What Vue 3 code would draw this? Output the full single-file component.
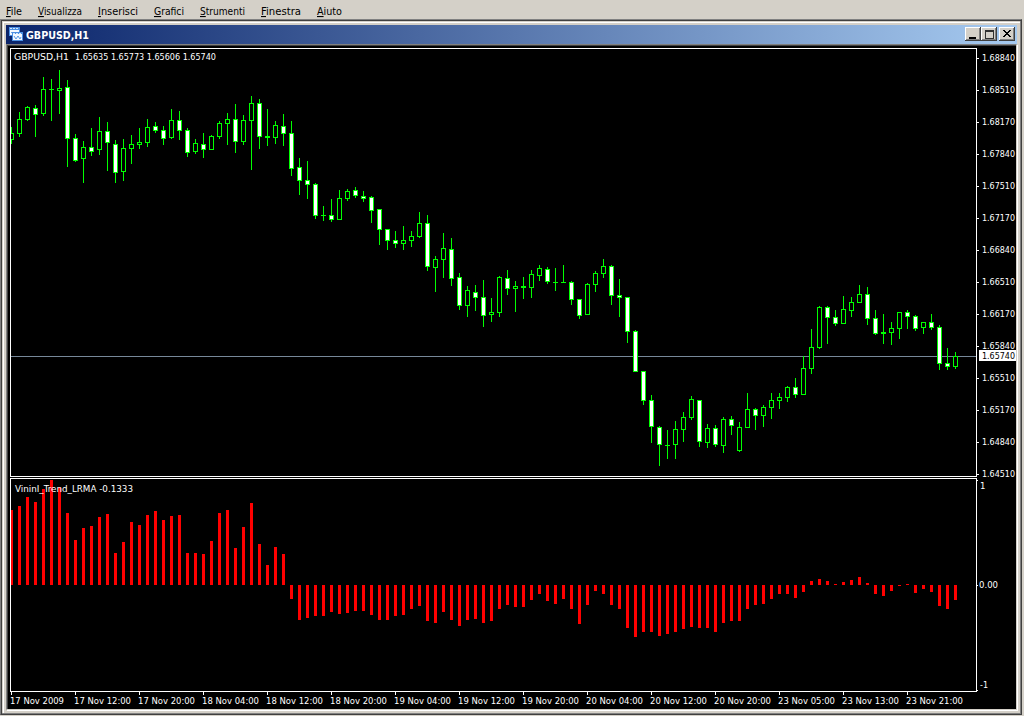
<script setup>
import { computed } from 'vue'

const menu = [
  { label: 'File', width: 16 },
  { label: 'Visualizza', width: 44 },
  { label: 'Inserisci', width: 40 },
  { label: 'Grafici', width: 30 },
  { label: 'Strumenti', width: 45 },
  { label: 'Finestra', width: 40 },
  { label: 'Aiuto', width: 25 }
]

const prices = ['1.68840', '1.68510', '1.68170', '1.67840', '1.67510', '1.67170', '1.66840',
  '1.66510', '1.66170', '1.65840', '1.65510', '1.65170', '1.64840', '1.64510']

const times = ['17 Nov 2009', '17 Nov 12:00', '17 Nov 20:00', '18 Nov 04:00', '18 Nov 12:00',
  '18 Nov 20:00', '19 Nov 04:00', '19 Nov 12:00', '19 Nov 20:00', '20 Nov 04:00',
  '20 Nov 12:00', '20 Nov 20:00', '23 Nov 05:00', '23 Nov 13:00', '23 Nov 21:00']

// wick top, body top, body bottom, wick bottom, 1 = bearish
const bars = [
  [127, 133, 140, 144, 0], [112, 119, 134, 137, 0], [106, 107, 120, 121, 0], [105, 108, 115, 137, 1],
  [77, 89, 114, 116, 0], [79, 89, 90, 121, 0], [70, 88, 91, 114, 0], [80, 87, 139, 167, 1],
  [134, 138, 161, 162, 1], [141, 147, 159, 183, 0], [128, 147, 152, 156, 1], [117, 131, 150, 155, 0],
  [122, 131, 143, 171, 1], [140, 144, 173, 183, 1], [139, 148, 172, 181, 0], [135, 144, 149, 164, 0],
  [128, 142, 145, 149, 0], [119, 127, 143, 147, 0], [122, 126, 131, 133, 1], [126, 130, 139, 145, 1],
  [109, 120, 138, 139, 0], [111, 120, 131, 140, 1], [128, 130, 153, 157, 1], [139, 143, 152, 154, 0],
  [133, 144, 150, 158, 1], [135, 136, 150, 150, 0], [121, 123, 137, 139, 0], [113, 119, 124, 145, 0],
  [104, 119, 142, 153, 1], [115, 120, 142, 145, 0], [96, 103, 121, 170, 0], [99, 103, 137, 149, 1],
  [109, 136, 138, 146, 0], [121, 125, 138, 144, 0], [114, 126, 134, 146, 1], [121, 133, 169, 176, 1],
  [158, 167, 181, 195, 1], [161, 180, 185, 199, 1], [183, 184, 216, 219, 1], [206, 215, 216, 221, 0],
  [199, 215, 220, 222, 1], [190, 198, 220, 220, 0], [189, 191, 199, 201, 0], [187, 190, 196, 198, 1],
  [191, 196, 199, 202, 1], [196, 197, 211, 223, 1], [209, 209, 230, 245, 1], [229, 229, 241, 250, 1],
  [231, 240, 244, 248, 1], [226, 240, 244, 250, 0], [231, 236, 241, 247, 0], [212, 223, 237, 238, 0],
  [215, 223, 267, 271, 1], [256, 259, 268, 292, 0], [233, 248, 260, 278, 0], [238, 249, 279, 286, 1],
  [273, 277, 306, 310, 1], [286, 290, 306, 317, 0], [285, 292, 298, 311, 1], [280, 297, 316, 327, 1],
  [298, 312, 315, 322, 0], [276, 277, 313, 317, 0], [270, 278, 289, 295, 1], [281, 286, 289, 312, 0],
  [277, 286, 288, 299, 0], [270, 274, 288, 298, 0], [265, 268, 276, 281, 0], [267, 269, 282, 284, 1],
  [268, 282, 283, 291, 0], [265, 282, 283, 283, 0], [281, 282, 300, 305, 1], [299, 299, 316, 319, 1],
  [283, 284, 315, 315, 0], [271, 273, 285, 292, 0], [259, 266, 274, 278, 0], [265, 266, 296, 305, 1],
  [279, 295, 298, 317, 1], [297, 297, 332, 343, 1], [330, 331, 372, 372, 1], [371, 371, 401, 405, 1],
  [395, 400, 427, 443, 1], [426, 427, 445, 466, 1], [430, 445, 446, 459, 0], [421, 429, 445, 459, 0],
  [412, 417, 430, 442, 0], [396, 399, 418, 420, 0], [400, 400, 442, 447, 1], [424, 428, 443, 448, 0],
  [425, 428, 445, 447, 1], [417, 419, 446, 453, 0], [416, 419, 426, 435, 1], [422, 427, 451, 452, 0],
  [393, 409, 428, 428, 0], [408, 409, 416, 430, 1], [405, 407, 416, 427, 0], [393, 400, 408, 419, 0],
  [393, 397, 401, 409, 0], [386, 387, 398, 402, 0], [378, 387, 395, 398, 1], [356, 368, 395, 395, 0],
  [329, 347, 369, 374, 0], [306, 307, 348, 349, 0], [306, 307, 318, 344, 1], [310, 317, 324, 326, 1],
  [296, 309, 324, 324, 0], [297, 302, 311, 317, 0], [285, 294, 303, 303, 0], [287, 294, 319, 325, 1],
  [310, 318, 334, 335, 1], [314, 332, 334, 344, 0], [322, 328, 333, 345, 0], [312, 312, 329, 339, 0],
  [310, 312, 317, 329, 1], [315, 316, 329, 331, 1], [322, 322, 328, 334, 0], [314, 322, 328, 330, 1],
  [325, 327, 364, 370, 1], [348, 363, 367, 370, 1], [352, 356, 367, 369, 0]
]

// height over (+) or under (-) the zero level
const trend = [
  75, 79, 88, 83, 96, 105, 98, 72, 45, 57, 59, 68, 71, 32, 43, 63, 60, 70, 74, 65,
  69, 70, 32, 32, 31, 44, 72, 75, 37, 58, 82, 41, 20, 38, 31, -14, -35, -33, -31, -31,
  -27, -29, -28, -26, -26, -30, -35, -35, -31, -30, -24, -21, -36, -38, -27, -35, -41, -35, -34, -38,
  -36, -24, -20, -22, -22, -15, -9, -16, -19, -14, -24, -39, -20, -6, -9, -20, -24, -43, -52, -47,
  -47, -51, -49, -47, -44, -42, -43, -43, -47, -38, -36, -36, -24, -20, -19, -14, -9, -9, -13, -7,
  4, 6, 4, 1, 3, 5, 8, 2, -9, -11, -6, -1, 1, -8, -4, -7, -21, -24, -15
]

const zero = 585

const candles = computed(() => bars.map(([high, top, bottom, low, down], i) => ({
  x: 11 + i * 8,
  high,
  top,
  height: bottom - top,
  range: low - high,
  fill: down ? '#fff' : '#000'
})))

const histogram = computed(() => trend.map((v, i) => ({
  x: 10 + i * 8,
  y: v > 0 ? zero - v : zero,
  height: Math.abs(v)
})))
</script>

<template>
  <div class="app">
    <nav class="menu">
      <a v-for="item in menu" :key="item.label">
        <svg :width="item.width" height="15">
          <text x="0" y="11" :textLength="item.width" lengthAdjust="spacingAndGlyphs"><tspan class="key">{{ item.label[0] }}</tspan>{{ item.label.slice(1) }}</text>
        </svg>
      </a>
    </nav>

    <div class="window">
      <header class="titlebar">
        <svg class="logo" width="16" height="16" shape-rendering="crispEdges">
          <rect x="0" y="0" width="11" height="9" fill="#4d90e2" />
          <rect x="1" y="3" width="9" height="5" fill="#f4f9ff" />
          <path d="M1 1.5h2M4 1.5h2M7 1.5h2" stroke="#d5e8fc" />
          <path d="M2 5h1v2h2v-2h1" fill="none" stroke="#6ba6e8" />
          <rect x="3" y="5" width="11" height="9" fill="#4d90e2" />
          <rect x="4" y="7" width="9" height="6" fill="#f4f9ff" />
          <path d="M4 6.5h2M7 6.5h2M10 6.5h2" stroke="#d5e8fc" />
          <path d="M5 9l2 3l2-3l2 3l1-2" fill="none" stroke="#5b9ae4" shape-rendering="auto" />
        </svg>
        <svg class="caption" width="66" height="16">
          <text x="0" y="12" textLength="63" lengthAdjust="spacingAndGlyphs">GBPUSD,H1</text>
        </svg>
        <div class="buttons">
          <button><svg width="12" height="11" shape-rendering="crispEdges"><rect x="2" y="8" width="7" height="2" /></svg></button>
          <button><svg width="12" height="11" shape-rendering="crispEdges"><path d="M2 1h9v9h-9zM3 3v6h7v-6z" fill="#303030" fill-rule="evenodd" /></svg></button>
          <button class="close"><svg width="12" height="11" shape-rendering="crispEdges"><path d="M2 1h2v1h1v1h2v-1h1v-1h2v1h-1v1h-1v1h-1v1h1v1h1v1h1v1h-2v-1h-1v-1h-2v1h-1v1h-2v-1h1v-1h1v-1h1v-1h-1v-1h-1v-1h-1z" /></svg></button>
        </div>
      </header>

      <div class="chart">
        <svg width="1008" height="663" viewBox="8 46 1008 663">
          <g shape-rendering="crispEdges">
            <rect x="11" y="356" width="965" height="1" fill="#778899" />
            <g v-for="c in candles" :key="c.x">
              <rect :x="c.x" :y="c.high" width="1" :height="c.range" fill="#0f0" />
              <rect :x="c.x - 2" :y="c.top" width="5" :height="c.height" fill="#0f0" />
              <rect v-if="c.height > 2" :x="c.x - 1" :y="c.top + 1" width="3" :height="c.height - 2" :fill="c.fill" />
            </g>
            <rect v-for="b in histogram" :key="b.x" :x="b.x" :y="b.y" width="3" :height="b.height" fill="#f00" />
            <rect x="8" y="120" width="2" height="480" fill="#000" />
            <g fill="#fff">
              <rect x="10" y="48" width="967" height="1" />
              <rect x="10" y="476" width="967" height="1" />
              <rect x="10" y="478" width="967" height="1" />
              <rect x="10" y="691" width="967" height="1" />
              <rect x="10" y="48" width="1" height="429" />
              <rect x="10" y="478" width="1" height="214" />
              <rect x="976" y="48" width="1" height="429" />
              <rect x="976" y="478" width="1" height="214" />
              <rect v-for="(p, i) in prices" :key="p" x="977" :y="58 + i * 32" width="2" height="1" />
              <rect v-for="(t, i) in times" :key="t" :x="11 + i * 64" y="692" width="1" height="3" />
              <rect x="977" y="480" width="1" height="1" />
              <rect x="977" y="585" width="1" height="1" />
              <rect x="977" y="690" width="1" height="1" />
            </g>
          </g>
          <g class="labels">
            <text x="14" y="60" textLength="55" lengthAdjust="spacingAndGlyphs">GBPUSD,H1</text>
            <text x="75" y="60" textLength="141" lengthAdjust="spacingAndGlyphs">1.65635 1.65773 1.65606 1.65740</text>
            <text x="15" y="492" textLength="118" lengthAdjust="spacingAndGlyphs">VininI_Trend_LRMA -0.1333</text>
            <text v-for="(p, i) in prices" :key="p" x="982" :y="61 + i * 32" textLength="33" lengthAdjust="spacingAndGlyphs">{{ p }}</text>
            <rect x="979" y="350" width="37" height="11" fill="#fff" />
            <text class="last" x="982" y="359" textLength="33" lengthAdjust="spacingAndGlyphs">1.65740</text>
            <text x="980" y="489">1</text>
            <text x="979" y="588" textLength="19" lengthAdjust="spacingAndGlyphs">0.00</text>
            <text x="980" y="688" textLength="8" lengthAdjust="spacingAndGlyphs">-1</text>
            <text v-for="(t, i) in times" :key="t" :x="10 + i * 64" y="704" :textLength="i ? 57 : 54" lengthAdjust="spacingAndGlyphs">{{ t }}</text>
          </g>
        </svg>
      </div>
    </div>
  </div>
</template>

<style>
body {
  background: #d4d0c8;
  overflow: hidden;
}
</style>

<style scoped>
.app {
  width: 1024px;
  height: 717px;
  box-sizing: border-box;
  border-bottom: 1px solid #fff;
  background: #d4d0c8;
  font-family: "DejaVu Sans Condensed", "DejaVu Sans", sans-serif;
}

.menu {
  display: flex;
  gap: 16px;
  height: 19px;
  padding: 4px 0 0 6px;
  box-sizing: border-box;
}

.menu svg {
  display: block;
  overflow: visible;
}

.menu text {
  font-size: 11px;
}

.key {
  text-decoration: underline;
}

.window {
  display: flex;
  flex-direction: column;
  width: 1022px;
  height: 696px;
  box-sizing: border-box;
  border: 1px solid #404040;
  border-top-color: #808080;
  border-left-color: #808080;
  box-shadow: inset 1px 1px #404040, inset -1px -1px #808080, inset 2px 2px #d4d0c8, inset 3px 3px #fff;
  padding: 5px 4px 4px 5px;
}

.titlebar {
  display: flex;
  align-items: flex-start;
  height: 19px;
  box-sizing: border-box;
  padding: 2px 2px 0 3px;
  background: linear-gradient(90deg, #0a246a, #a6caf0);
}

.caption {
  margin-left: 1px;
  overflow: visible;
}

.caption text {
  font-size: 11px;
  font-weight: bold;
  fill: #fff;
}

.buttons {
  display: flex;
  margin-left: auto;
}

.buttons button {
  width: 16px;
  height: 14px;
  padding: 2px;
  border: 0;
  background: #d4d0c8;
  box-shadow: inset -1px -1px #404040, inset 1px 1px #fff, inset -2px -2px #808080;
}

.buttons svg {
  display: block;
}

.buttons .close {
  margin-left: 2px;
}

.chart {
  flex: 1;
  box-sizing: border-box;
  border-top: 1px solid #808080;
  border-left: 1px solid #808080;
  border-right: 1px solid #d4d0c8;
  border-bottom: 1px solid #d4d0c8;
  box-shadow: 1px 1px #fff, inset 1px 1px #404040;
  padding: 1px 0 0 1px;
  background: #000;
}

.chart > svg {
  display: block;
  overflow: visible;
}

.labels text {
  font-size: 9.5px;
  fill: #fff;
  white-space: pre;
}

.labels .last {
  fill: #000;
}
</style>
